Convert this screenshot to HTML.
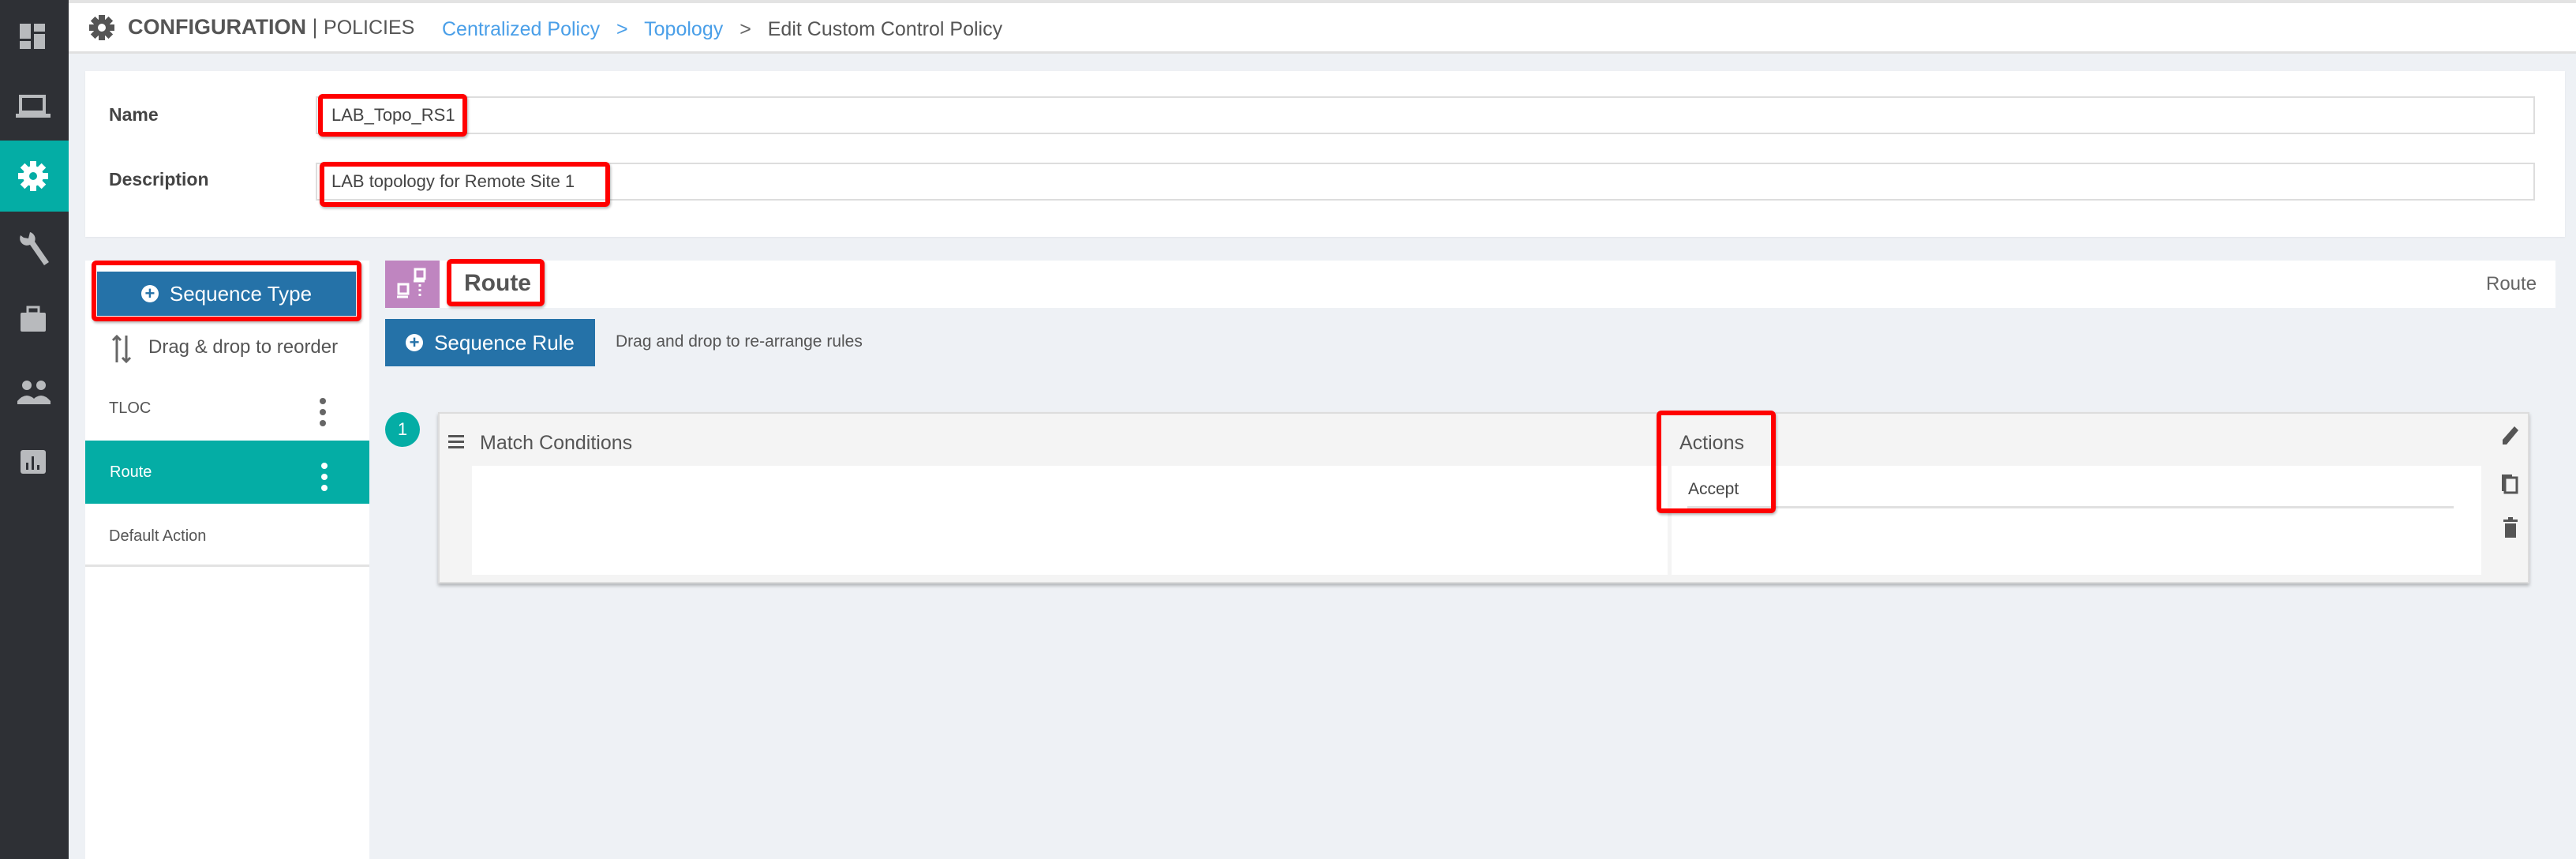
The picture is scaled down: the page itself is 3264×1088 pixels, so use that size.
<!DOCTYPE html>
<html><head><meta charset="utf-8"><style>
*{margin:0;padding:0;box-sizing:border-box}
body{width:3264px;height:1088px;background:#eef1f5;font-family:"Liberation Sans",Arial,sans-serif;color:#555;position:relative;overflow:hidden}
.a{position:absolute}
.side{left:0;top:0;width:87px;height:1088px;background:#2e3035}
.red{position:absolute;border:6px solid #f00;border-radius:6px;box-shadow:1px 2px 3px rgba(0,0,0,.3)}
.inp{position:absolute;background:#fff;border:2px solid #ddd;left:400px;width:2812px;height:48px}
.lbl{font-weight:bold;font-size:23px;color:#444}
.btn{background:#2572a8;color:#fff;font-size:26px;display:flex;align-items:center;justify-content:center}
.pl{display:inline-block;width:22px;height:22px;border-radius:50%;background:#fff;color:#2572a8;font-weight:bold;font-size:22px;line-height:22px;text-align:center;margin-right:14px}
</style></head><body>
<div class="a side"></div>
<svg class="a" style="left:0;top:0" width="87" height="620" fill="#b8babd">
<rect x="25" y="30" width="14" height="19"/><rect x="43" y="30" width="14" height="10"/><rect x="25" y="52" width="14" height="10"/><rect x="43" y="43" width="14" height="19"/>
<rect x="26" y="122" width="30" height="20" fill="none" stroke="#b8babd" stroke-width="4"/><rect x="20" y="144" width="44" height="5"/>
<rect x="0" y="178" width="87" height="90" fill="#04ada5"/>
<g fill="#fff"><rect x="38" y="204" width="8" height="38"/><rect x="23" y="219" width="38" height="8"/><rect x="38" y="204" width="8" height="38" transform="rotate(45 42 223)"/><rect x="38" y="204" width="8" height="38" transform="rotate(-45 42 223)"/><circle cx="42" cy="223" r="13"/></g>
<circle cx="42" cy="223" r="5" fill="#04ada5"/>
<path d="M26 298 a9 9 0 0 0 12 12 l18 26 l6 -4 l-18 -26 a9 9 0 0 0 -6 -12 l-2 8 l-6 -1 z"/>
<rect x="26" y="396" width="32" height="24" rx="2"/><rect x="35" y="389" width="14" height="8" fill="none" stroke="#b8babd" stroke-width="3"/>
<circle cx="34" cy="488" r="6"/><circle cx="52" cy="488" r="6"/><path d="M22 508 q12 -14 24 0 v4 h-24z M40 508 q12 -14 24 0 v4 h-18z"/>
<rect x="26" y="570" width="32" height="30" rx="3"/><g fill="#2e3035"><rect x="33" y="586" width="3" height="9"/><rect x="40" y="578" width="3" height="17"/><rect x="47" y="589" width="3" height="6"/></g>
</svg>
<div class="a" style="left:87px;top:0;width:3177px;height:4px;background:#e3e3e3"></div>
<div class="a" style="left:87px;top:4px;width:3177px;height:64px;background:#fff;border-bottom:3px solid #e0e0e0"></div>
<svg class="a" style="left:112px;top:18px" width="34" height="34"><g fill="#555"><circle cx="17" cy="17" r="11"/><rect x="13" y="1" width="8" height="32"/><rect x="1" y="13" width="32" height="8"/><rect x="13" y="1" width="8" height="32" transform="rotate(45 17 17)"/><rect x="13" y="1" width="8" height="32" transform="rotate(-45 17 17)"/></g><circle cx="17" cy="17" r="5" fill="#fff"/></svg>
<div class="a" style="left:162px;top:19px;font-size:27px;color:#555;white-space:nowrap"><b>CONFIGURATION</b> | <span style="font-size:25px">POLICIES</span></div>
<div class="a" style="left:560px;top:23px;font-size:25px;white-space:nowrap"><span style="color:#4a9fe8">Centralized Policy</span> <span style="color:#4a9fe8;margin:0 14px">&gt;</span> <span style="color:#4a9fe8">Topology</span> <span style="color:#666;margin:0 14px">&gt;</span> <span style="color:#555">Edit Custom Control Policy</span></div>
<div class="a" style="left:108px;top:90px;width:3142px;height:210px;background:#fff;box-shadow:0 1px 2px rgba(0,0,0,.05)"></div>
<div class="a lbl" style="left:138px;top:132px">Name</div>
<div class="a lbl" style="left:138px;top:214px">Description</div>
<div class="inp" style="top:122px"></div>
<div class="inp" style="top:206px"></div>
<div class="a" style="left:420px;top:133px;font-size:22px;color:#444">LAB_Topo_RS1</div>
<div class="a" style="left:420px;top:217px;font-size:22px;color:#444">LAB topology for Remote Site 1</div>
<div class="red" style="left:403px;top:119px;width:189px;height:54px"></div>
<div class="red" style="left:405px;top:205px;width:368px;height:57px"></div>
<div class="a" style="left:108px;top:330px;width:360px;height:758px;background:#fff"></div>
<div class="a btn" style="left:123px;top:344px;width:328px;height:56px"><span class="pl">+</span>Sequence Type</div>
<div class="red" style="left:116px;top:330px;width:342px;height:77px"></div>
<svg class="a" style="left:140px;top:423px" width="30" height="38" stroke="#666" stroke-width="3" fill="none"><path d="M8 36 V3 M3 8 L8 3 L13 8 M20 2 V35 M15 30 L20 35 L25 30"/></svg>
<div class="a" style="left:188px;top:426px;font-size:24px;color:#555">Drag &amp; drop to reorder</div>
<div class="a" style="left:138px;top:506px;font-size:20px;color:#555">TLOC</div>
<svg class="a" style="left:404px;top:503px" width="10" height="38" fill="#666"><circle cx="5" cy="5" r="4"/><circle cx="5" cy="19" r="4"/><circle cx="5" cy="33" r="4"/></svg>
<div class="a" style="left:108px;top:558px;width:360px;height:80px;background:#04ada5"></div>
<div class="a" style="left:139px;top:587px;font-size:20px;color:#fff">Route</div>
<svg class="a" style="left:406px;top:585px" width="10" height="38" fill="#fff"><circle cx="5" cy="5" r="4"/><circle cx="5" cy="19" r="4"/><circle cx="5" cy="33" r="4"/></svg>
<div class="a" style="left:138px;top:668px;font-size:20px;color:#555">Default Action</div>
<div class="a" style="left:108px;top:715px;width:360px;height:3px;background:#e3e3e3"></div>
<div class="a" style="left:488px;top:330px;width:2750px;height:60px;background:#fff"></div>
<div class="a" style="left:488px;top:330px;width:69px;height:60px;background:#bf85c0"></div>
<svg class="a" style="left:496px;top:336px" width="56" height="50" fill="none" stroke="#fff" stroke-width="3"><rect x="30" y="5" width="12" height="12"/><rect x="9" y="24" width="12" height="12"/><path d="M28 20h14 M7 40h14 M36 24v3 M36 30v3 M36 36v3" /></svg>
<div class="a" style="left:588px;top:342px;font-size:30px;font-weight:bold;color:#555">Route</div>
<div class="red" style="left:566px;top:328px;width:124px;height:60px"></div>
<div class="a" style="left:3150px;top:346px;font-size:24px;color:#666">Route</div>
<div class="a btn" style="left:488px;top:404px;width:266px;height:60px"><span class="pl">+</span>Sequence Rule</div>
<div class="a" style="left:780px;top:421px;font-size:21px;color:#555">Drag and drop to re-arrange rules</div>
<div class="a" style="left:488px;top:522px;width:44px;height:44px;border-radius:50%;background:#04ada5;color:#fff;font-size:22px;text-align:center;line-height:44px">1</div>
<div class="a" style="left:555px;top:522px;width:2650px;height:217px;background:#f4f4f4;border:2px solid #ddd;box-shadow:0 3px 4px rgba(0,0,0,.25)"></div>
<div class="a" style="left:598px;top:590px;width:1515px;height:138px;background:#fff"></div>
<div class="a" style="left:2118px;top:590px;width:1026px;height:138px;background:#fff"></div>
<svg class="a" style="left:568px;top:551px" width="20" height="18" fill="#555"><rect y="0" width="20" height="3"/><rect y="7" width="20" height="3"/><rect y="14" width="20" height="3"/></svg>
<div class="a" style="left:608px;top:547px;font-size:25px;color:#555">Match Conditions</div>
<div class="a" style="left:2128px;top:547px;font-size:25px;color:#555">Actions</div>
<div class="a" style="left:2139px;top:608px;font-size:21px;color:#444">Accept</div>
<div class="a" style="left:2138px;top:641px;width:971px;height:3px;background:#e0e0e0"></div>
<div class="red" style="left:2099px;top:520px;width:151px;height:130px"></div>
<svg class="a" style="left:3166px;top:533px" width="30" height="170" fill="#555"><path d="M5 30 L5 24 L20 7 L25 12 L10 30 Z"/><rect x="8" y="72" width="15" height="19" fill="none" stroke="#555" stroke-width="3"/><path d="M4 68 h13 v3 h-10 v18 h-3z"/><rect x="8" y="130" width="14" height="18"/><rect x="6" y="125" width="18" height="3"/><rect x="12" y="122" width="6" height="3"/></svg>
</body></html>
